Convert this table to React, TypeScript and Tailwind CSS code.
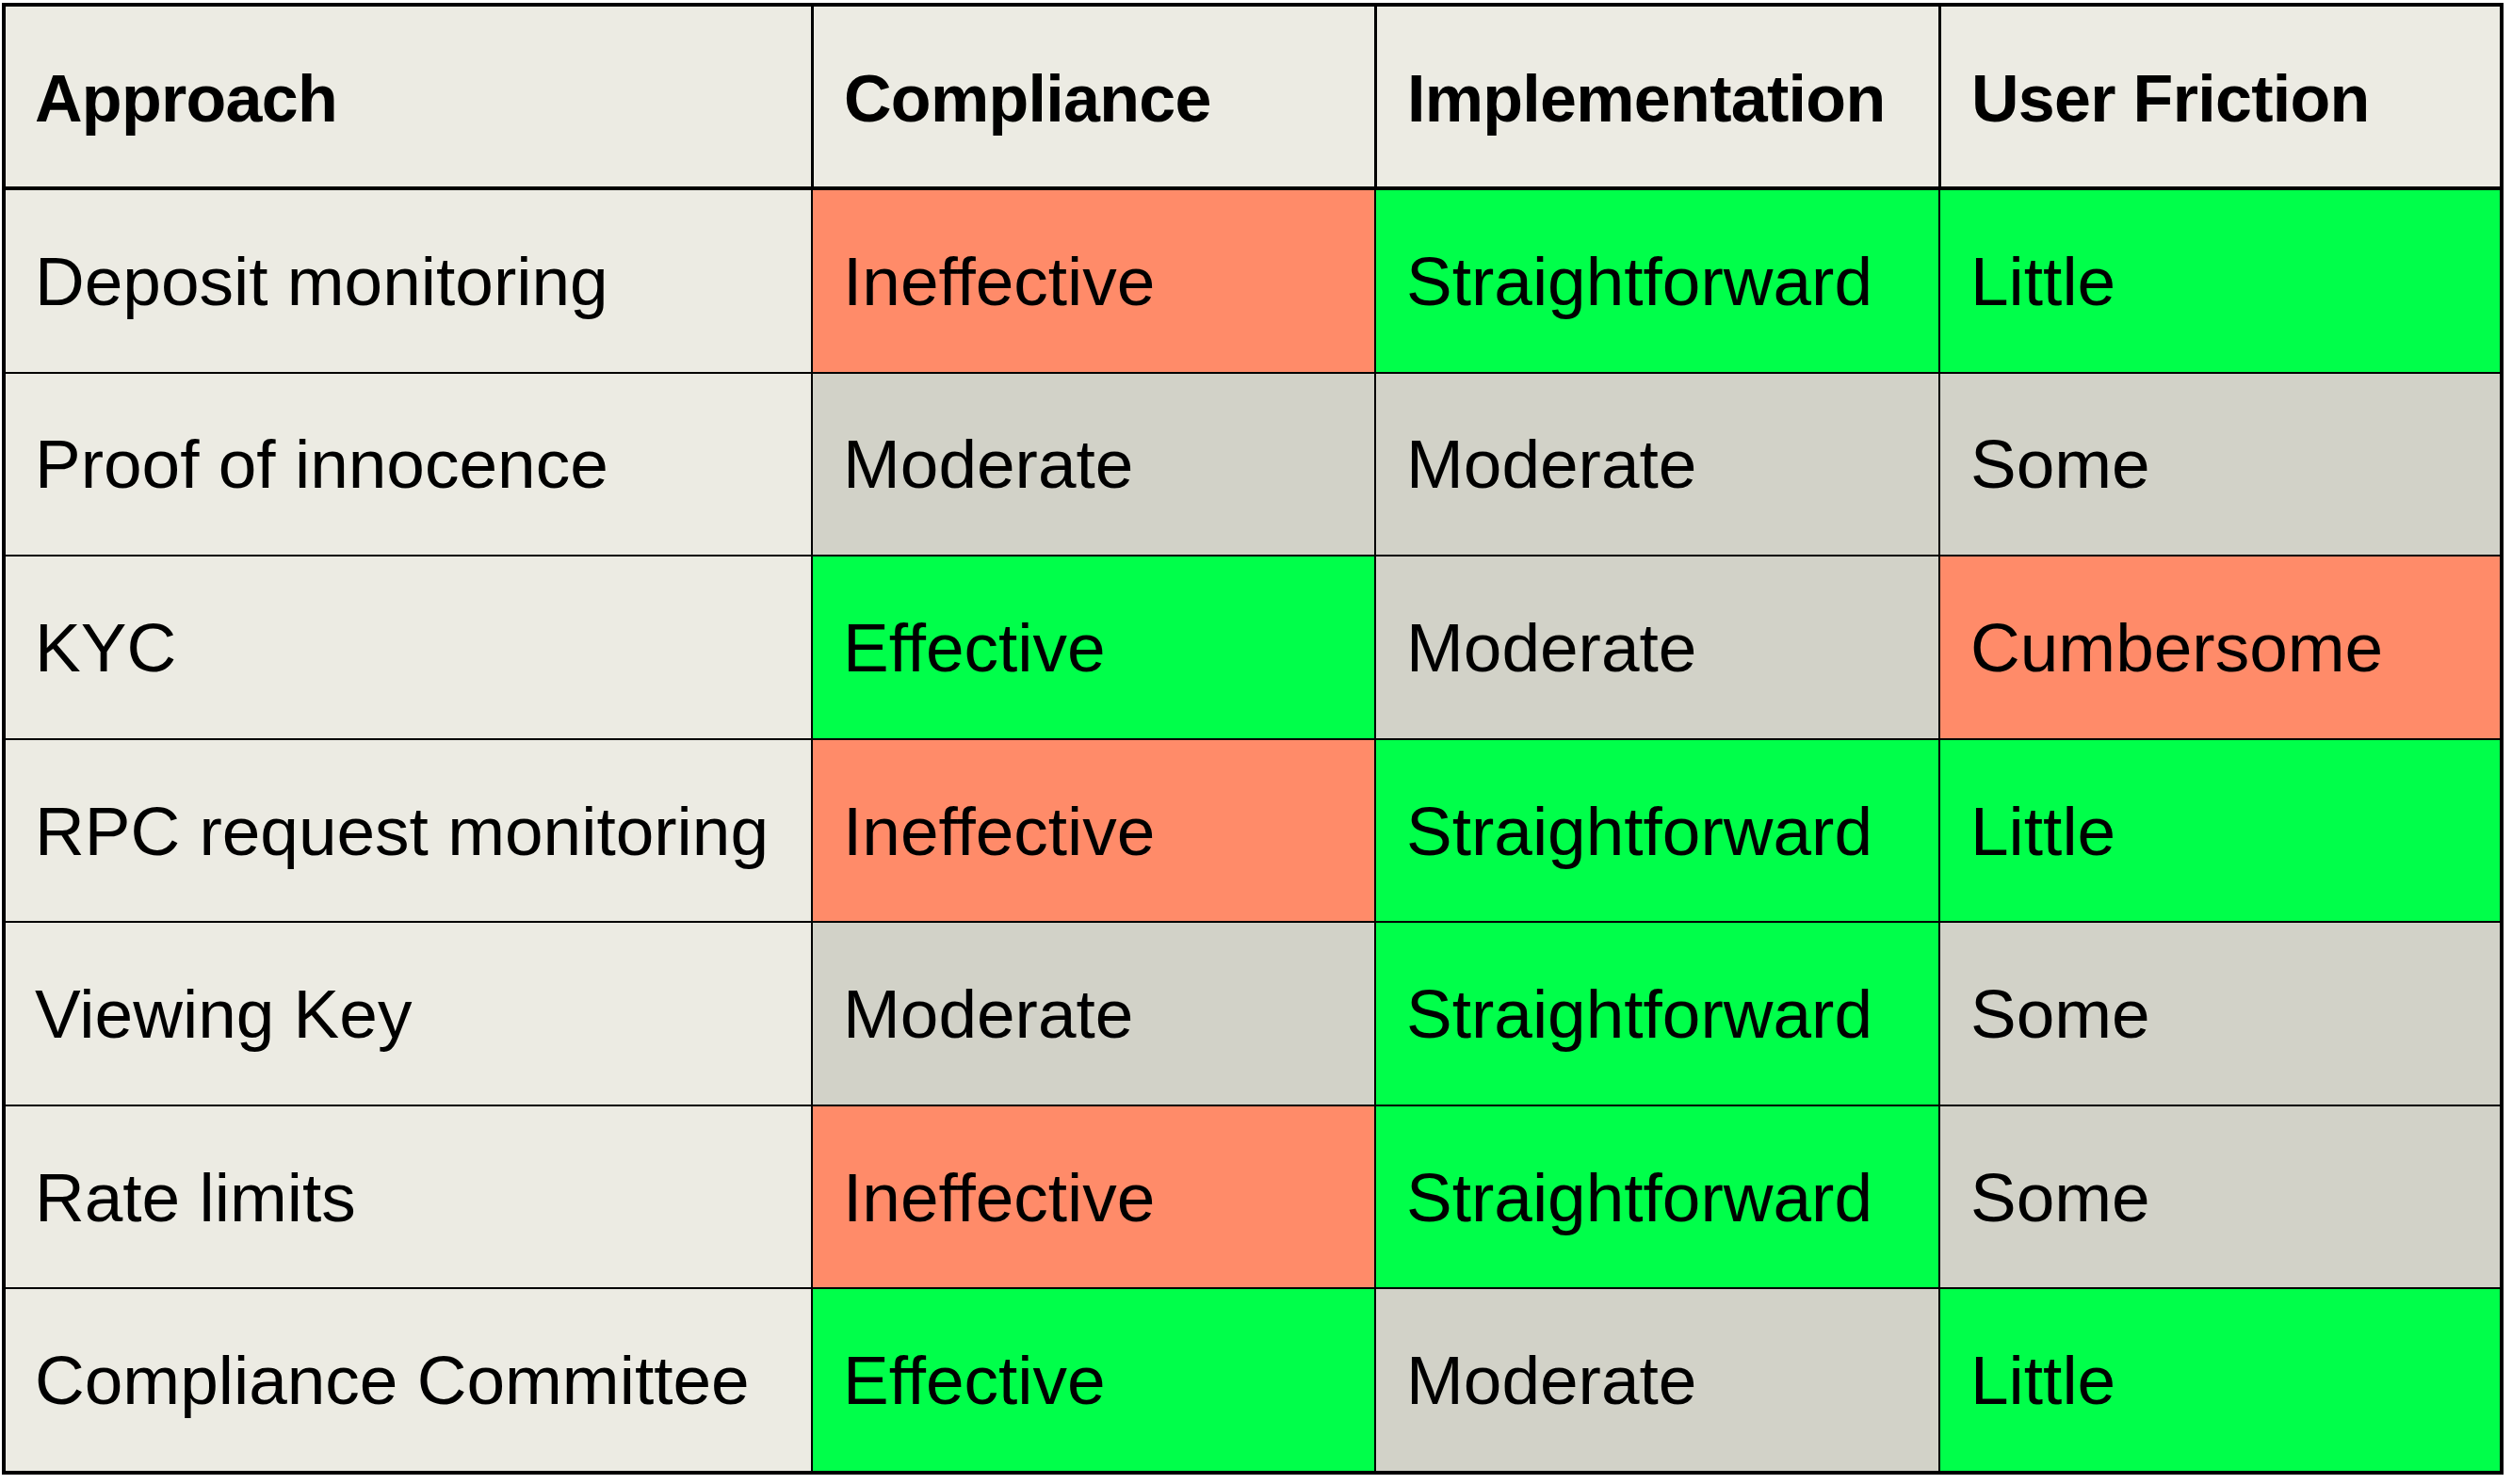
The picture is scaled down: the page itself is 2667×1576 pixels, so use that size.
const rating = {
  bad: "bg-[#ff8b69]",
  mid: "bg-[#d2d2c8]",
  good: "bg-[#00ff4a]",
} as const;

type Level = keyof typeof rating;

type Cell = { label: string; level: Level };

const rows: { approach: string; cells: Cell[] }[] = [
  {
    approach: "Deposit monitoring",
    cells: [
      { label: "Ineffective", level: "bad" },
      { label: "Straightforward", level: "good" },
      { label: "Little", level: "good" },
    ],
  },
  {
    approach: "Proof of innocence",
    cells: [
      { label: "Moderate", level: "mid" },
      { label: "Moderate", level: "mid" },
      { label: "Some", level: "mid" },
    ],
  },
  {
    approach: "KYC",
    cells: [
      { label: "Effective", level: "good" },
      { label: "Moderate", level: "mid" },
      { label: "Cumbersome", level: "bad" },
    ],
  },
  {
    approach: "RPC request monitoring",
    cells: [
      { label: "Ineffective", level: "bad" },
      { label: "Straightforward", level: "good" },
      { label: "Little", level: "good" },
    ],
  },
  {
    approach: "Viewing Key",
    cells: [
      { label: "Moderate", level: "mid" },
      { label: "Straightforward", level: "good" },
      { label: "Some", level: "mid" },
    ],
  },
  {
    approach: "Rate limits",
    cells: [
      { label: "Ineffective", level: "bad" },
      { label: "Straightforward", level: "good" },
      { label: "Some", level: "mid" },
    ],
  },
  {
    approach: "Compliance Committee",
    cells: [
      { label: "Effective", level: "good" },
      { label: "Moderate", level: "mid" },
      { label: "Little", level: "good" },
    ],
  },
];

const headers = ["Approach", "Compliance", "Implementation", "User Friction"];

// column widths incl. left divider
const cols = "grid grid-cols-[855px_598px_599px_1fr]";

export default function App() {
  return (
    <div className="min-h-screen w-full bg-white pt-[3px] pl-[2px] font-['Liberation_Sans',Arial,sans-serif] text-black">
      <div className="flex h-[1563px] w-[2656px] flex-col border-4 border-black bg-[#ecebe3]">
        {/* header */}
        <div className={`${cols} h-[195px] shrink-0 border-b-4 border-black`}>
          {headers.map((h, i) => (
            <div
              key={h}
              className={
                "flex items-center pt-[6px] text-[70px] font-bold tracking-[-0.01em] " +
                (i === 0 ? "pl-[31px]" : "border-l-[3px] border-black pl-[32px]")
              }
            >
              {h}
            </div>
          ))}
        </div>

        {rows.map((row, r) => (
          <div
            key={row.approach}
            className={`${cols} flex-1 ${r > 0 ? "border-t-2 border-black" : ""}`}
          >
            <div className="flex items-center pl-[31px] text-[73px] leading-none">
              {row.approach}
            </div>
            {row.cells.map((c, i) => (
              <div
                key={i}
                className={`flex items-center border-l-2 border-black pl-[32px] text-[73px] leading-none ${rating[c.level]}`}
              >
                {c.label}
              </div>
            ))}
          </div>
        ))}
      </div>
    </div>
  );
}
